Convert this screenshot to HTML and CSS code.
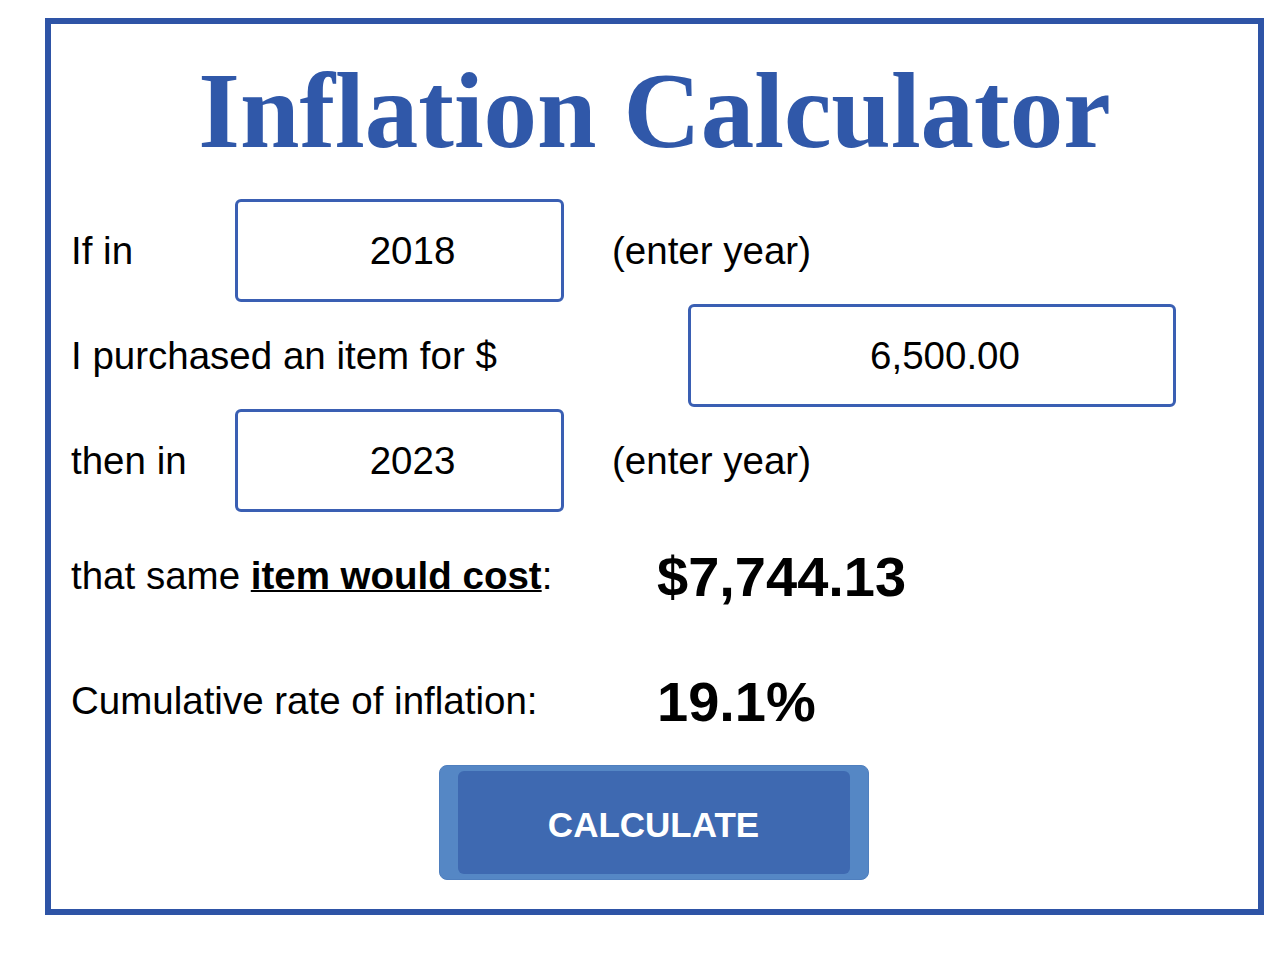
FILE: index.html
```html
<!DOCTYPE html>
<html lang="en">
<head>
  <meta charset="UTF-8" />
  <meta name="viewport" content="width=device-width, initial-scale=1.0" />
  <title>Inflation Calculator</title>
  <link rel="stylesheet" href="styles.css">
</head>
<body>
  <div class="calculator">
    <h1>Inflation Calculator</h1>

    <div class="rows">
      <div class="row">
        <label class="label label-year" for="startYear">If in</label>
        <input type="text" id="startYear" class="field field-year" value="2018">
        <span class="hint">(enter year)</span>
      </div>

      <div class="row">
        <label class="label label-amount" for="amount">I purchased an item for $</label>
        <input type="text" id="amount" class="field field-amount" value="6,500.00">
      </div>

      <div class="row">
        <label class="label label-year" for="endYear">then in</label>
        <input type="text" id="endYear" class="field field-year" value="2023">
        <span class="hint">(enter year)</span>
      </div>
    </div>

    <div class="result-row result-cost">
      <span class="label label-result">that same <u class="em">item would cost</u>:</span>
      <span class="value" id="cost">$7,744.13</span>
    </div>

    <div class="result-row result-rate">
      <span class="label label-result">Cumulative rate of inflation:</span>
      <span class="value" id="rate">19.1%</span>
    </div>

    <div class="actions">
      <button class="calc-btn" onclick="calculate()"><span class="calc-btn-inner">CALCULATE</span></button>
    </div>
  </div>

  <script>
    // CPI-U annual averages
    const cpi = { 2018: 251.107, 2023: 299.0 };

    function calculate() {
      const start = parseInt(document.getElementById('startYear').value);
      const end = parseInt(document.getElementById('endYear').value);
      const amount = parseFloat(document.getElementById('amount').value.replace(/,/g, ''));
      if (!cpi[start] || !cpi[end] || isNaN(amount)) return;

      const ratio = cpi[end] / cpi[start];
      document.getElementById('cost').textContent = '$' + (amount * ratio).toLocaleString('en-US', { minimumFractionDigits: 2, maximumFractionDigits: 2 });
      document.getElementById('rate').textContent = ((ratio - 1) * 100).toFixed(1) + '%';
    }
  </script>
</body>
</html>
```

FILE: styles.css
```css
body {
  margin: 0;
  background-color: #fff;
  font-family: "Liberation Sans", Arial, sans-serif;
  color: #000;
}

.calculator {
  box-sizing: border-box;
  width: 1219px;
  margin: 18px 0 0 45px;
  border: 6px solid #2e54a6;
  padding: 34px 0 29px 20px;
}

h1 {
  margin: 0 0 34px -20px;
  font-family: "Liberation Serif", "Times New Roman", serif;
  font-size: 107px;
  line-height: 107px;
  font-weight: bold;
  color: #3058a9;
  text-align: center;
}

.rows {
  display: flex;
  flex-direction: column;
  gap: 2px;
}

.row {
  display: flex;
  align-items: center;
}

.label {
  font-size: 38.5px;
  flex-shrink: 0;
}

.label-year {
  width: 164px;
}

.label-amount {
  width: 617px;
}

.label-result {
  width: 586px;
}

.field {
  box-sizing: border-box;
  height: 103px;
  border: 3px solid #3a5fb3;
  border-radius: 6px;
  font-family: "Liberation Sans", Arial, sans-serif;
  font-size: 38.5px;
  text-align: center;
  color: #000;
  background: #fff;
  padding: 0 0 0 26px;
  outline: none;
}

.field-year {
  width: 329px;
}

.field-amount {
  width: 488px;
}

.hint {
  margin-left: 48px;
  font-size: 38.5px;
}

.em {
  font-weight: bold;
  text-decoration-thickness: 2px;
}

.result-row {
  display: flex;
  align-items: center;
  height: 70px;
}

.result-cost {
  margin-top: 29px;
}

.result-rate {
  margin-top: 55px;
}

.value {
  font-size: 56px;
  font-weight: bold;
}

.actions {
  display: flex;
  justify-content: center;
  margin: 29px 0 0 -22px;
}

.calc-btn {
  display: block;
  width: 430px;
  height: 115px;
  padding: 5px 18px;
  border: 1px solid #4f7fbe;
  border-radius: 8px;
  background-color: #5587c5;
  cursor: pointer;
  font-family: "Liberation Sans", Arial, sans-serif;
}

.calc-btn-inner {
  display: flex;
  align-items: center;
  justify-content: center;
  height: 100%;
  padding-top: 4px;
  box-sizing: border-box;
  border-radius: 6px;
  background-color: #3e69b1;
  color: #fff;
  font-size: 35px;
  font-weight: bold;
}
```
